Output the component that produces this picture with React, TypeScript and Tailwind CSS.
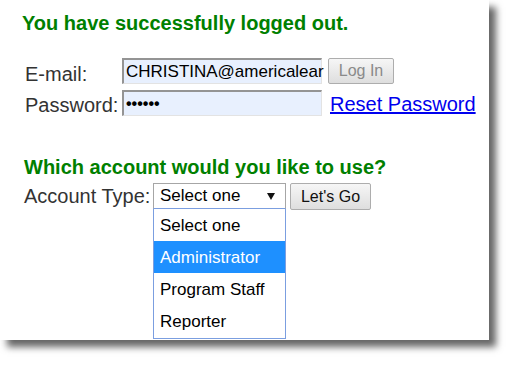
import React from "react";

const font = { fontFamily: '"Liberation Sans", Arial, sans-serif' };

const options = ["Select one", "Administrator", "Program Staff", "Reporter"];

const Field = ({ children }: { children: React.ReactNode }) => (
  <div className="w-[200px] h-[26px] bg-[#e8f0fe] border-t-2 border-l-2 border-r border-b border-t-[#949494] border-l-[#949494] border-r-[#e3e3e3] border-b-[#e3e3e3] pl-[2px] whitespace-nowrap">
    {children}
  </div>
);

const Button = ({ label, disabled, w, h }: any) => (
  <div
    className={`${w} ${h} border border-[#adadad] rounded-[2px] bg-gradient-to-b from-[#f6f6f6] to-[#dedede] flex items-center justify-center text-[16px] ${
      disabled ? "text-[#8a8a8a]" : "text-[#111]"
    }`}
  >
    {label}
  </div>
);

export default function App() {
  return (
    <div className="w-[514px] h-[365px] bg-white" style={font}>
      <div className="w-[489px] h-[340px] bg-white shadow-[7px_7px_7px_rgba(0,0,0,0.6)] flex flex-col">
        <h1 className="pl-[22px] pt-[11px] text-[20px] leading-[24px] font-bold text-[#008000]">
          You have successfully logged out.
        </h1>

        <div className="pl-[25px] mt-[23px] flex items-start">
          <div className="w-[97px] mt-[6px] text-[20px] leading-[20px] text-[#333]">E-mail:</div>
          <Field>
            <span className="text-[17px] leading-[21px] text-black">CHRISTINA@americalear</span>
          </Field>
          <div className="ml-[6px]">
            <Button label="Log In" disabled w="w-[66px]" h="h-[26px]" />
          </div>
        </div>

        <div className="pl-[25px] mt-[6px] flex items-start">
          <div className="w-[97px] mt-[5px] text-[20px] leading-[20px] text-[#333]">Password:</div>
          <Field>
            <span className="text-[16px] leading-[22px] font-bold text-black">••••••</span>
          </Field>
          <a href="#" className="ml-[8px] mt-[4px] text-[20px] leading-[20px] text-[#0000ee] underline">
            Reset Password
          </a>
        </div>

        <h2 className="pl-[24px] mt-[39px] text-[20px] leading-[24px] font-bold text-[#008000]">
          Which account would you like to use?
        </h2>

        <div className="pl-[24px] mt-[4px] flex items-start">
          <div className="w-[129px] mt-[3px] text-[20px] leading-[20px] text-[#333]">Account Type:</div>
          <div className="relative">
            <div className="w-[133px] h-[26px] border border-[#a6a6a6] border-b-[#7b9ee0] bg-white flex items-start justify-between pl-[6px] pr-[10px] text-[17px] leading-[24px] text-black">
              <span>Select one</span>
              <svg width="8" height="8" viewBox="0 0 8 8" className="mt-[9px]">
                <path d="M0 0 H8 L4 7 Z" fill="#111" />
              </svg>
            </div>
            <div className="absolute left-0 top-[26px] w-[133px] h-[130px] border border-[#7b9ee0] border-t-0 bg-white">
              {options.map((o, i) => (
                <div
                  key={o}
                  className={`h-[32px] leading-[33px] text-[17px] pl-[6px] ${
                    i === 1 ? "bg-[#1e90ff] text-white" : "text-black"
                  }`}
                >
                  {o}
                </div>
              ))}
            </div>
          </div>
          <div className="ml-[4px]">
            <Button label="Let's Go" w="w-[81px]" h="h-[27px]" />
          </div>
        </div>
      </div>
    </div>
  );
}
